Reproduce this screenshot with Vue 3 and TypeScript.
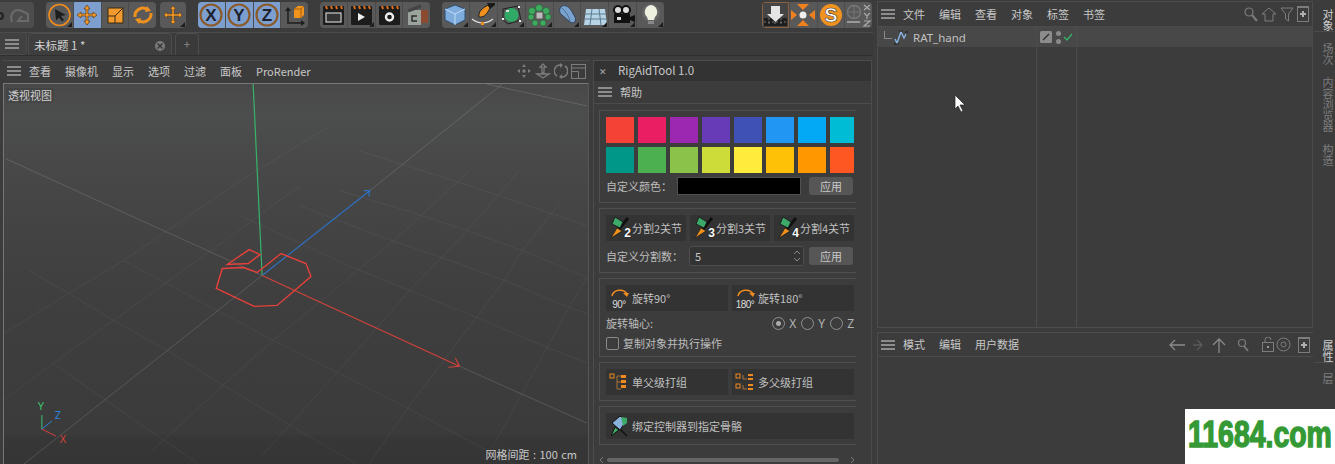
<script setup lang="ts">
const viewMenu = ['查看', '摄像机', '显示', '选项', '过滤', '面板', 'ProRender']
const objMenu = ['文件', '编辑', '查看', '对象', '标签', '书签']
const attrMenu = ['模式', '编辑', '用户数据']
const swatches = [
  '#f44336', '#e91e63', '#9c27b0', '#673ab7', '#3f51b5', '#2196f3', '#03a9f4', '#00bcd4',
  '#009688', '#4caf50', '#8bc34a', '#cddc39', '#ffeb3b', '#ffc107', '#ff9800', '#ff5722'
]
const splits = [2, 3, 4]
const sideTop = ['对象', '场次', '内容浏览器', '构造']
const gridLines = [
  '260,457 290,425 337,372 375,330 410,290 442,257 468,230 520,170',
  '370,463 408,408 477,317 505,280 523,250 560,203',
  '493,447 523,393 548,347 570,307 588,277',
  '150,452 163,440 223,385 273,340 330,293 400,235 470,170',
  '3,333 68,293 123,260 167,230 240,180 330,125',
  '3,400 52,363 113,320 173,277 245,225 300,185',
  '353,267 410,290 477,317 548,347 588,363',
  '240,215 353,267',
  '28,270 68,293 113,320 163,348 223,385 290,425 357,464',
  '52,363 163,440 197,463',
  '123,260 273,340 337,372 408,408 487,450 515,464',
  '300,205 383,237 442,257 505,280 570,307 588,313',
  '340,190 407,210 468,230 523,250 588,277',
  '360,150 470,185 588,225'
]
</script>

<template>
  <div class="app">
    <div class="left">
      <header class="toolbar">
        <div class="group g0">
          <div class="btn">
            <svg width="34" height="26" viewBox="0 0 34 26"><path d="M12 20c-3-9 3-14 10-11l6 3v7H18l4-5" fill="none" stroke="#6b6b6b" stroke-width="2"/><circle cx="0" cy="14" r="3" fill="none" stroke="#222" stroke-width="2"/></svg>
          </div>
        </div>
        <div class="group g1">
          <div class="btn tri">
            <svg width="27" height="26" viewBox="0 0 27 26"><circle cx="13.500" cy="13" r="10.500" fill="none" stroke="#f08c1e" stroke-width="1.600"/><path d="M9 7l11 6-5 1 3 4-2 1.500-3-4-3 3z" fill="#1e1e1e"/></svg>
          </div>
          <div class="btn on">
            <svg width="28" height="26" viewBox="0 0 28 26"><path d="M14 3l3 4h-2v5h5v-2l4 3-4 3v-2h-5v5h2l-3 4-3-4h2v-5H8v2l-4-3 4-3v2h5V7h-2z" fill="#f5992a" stroke="#5a3a10" stroke-width=".7"/></svg>
          </div>
          <div class="btn">
            <svg width="28" height="26" viewBox="0 0 28 26"><rect x="7" y="6" width="15" height="15" fill="#f29a2e" stroke="#3a2a10"/><path d="M7 14h7v7M14 14l8-8" fill="none" stroke="#3a2a10"/></svg>
          </div>
          <div class="btn">
            <svg width="28" height="26" viewBox="0 0 28 26"><path d="M6 15a8 8 0 0 1 13-7M22 11a8 8 0 0 1-13 7" fill="none" stroke="#f0901e" stroke-width="3"/><path d="M18 4l4 5-6 1zM10 22l-4-5 6-1z" fill="#f0901e"/></svg>
          </div>
        </div>
        <div class="group g2">
          <div class="btn tri">
            <svg width="26" height="26" viewBox="0 0 26 26"><path d="M13 4l3 3h-2v5h5v-2l3 3-3 3v-2h-5v5h2l-3 3-3-3h2v-5H7v2l-3-3 3-3v2h5V7h-2z" fill="#f5992a" stroke="#5a3a10" stroke-width=".5"/></svg>
          </div>
        </div>
        <div class="group g3">
          <div v-for="a in ['X','Y','Z']" :key="a" class="btn on">
            <svg width="28" height="26" viewBox="0 0 28 26"><circle cx="14" cy="13" r="10.500" fill="none" stroke="#8c5a28" stroke-width="2.200"/><text x="14" y="19" text-anchor="middle" class="axis">{{ a }}</text></svg>
          </div>
          <div class="btn">
            <svg width="28" height="26" viewBox="0 0 28 26"><path d="M7 7v14h15" fill="none" stroke="#1e1e1e" stroke-width="1.500"/><path d="M4 9l3-4 3 4zM20 18l4 3-4 3z" fill="#1e1e1e"/><path d="M13 7l4-3h6v9l-3 3h-7z" fill="#f0941e"/><path d="M13 7h7v9M20 7l3-3" fill="none" stroke="#a85f10"/></svg>
          </div>
        </div>
        <div class="group g4">
          <div class="btn">
            <svg width="28" height="26" viewBox="0 0 28 26"><rect x="4" y="4" width="21" height="19" rx="1" fill="#1c1c1c"/><path d="M7 4l1 3M12 4l1 3M17 4l1 3M22 4l1 3" stroke="#e0701e" stroke-width="2"/><rect x="7" y="11" width="15" height="9" fill="#333" stroke="#ccc" stroke-width="1.200"/></svg>
          </div>
          <div class="btn tri">
            <svg width="28" height="26" viewBox="0 0 28 26"><rect x="4" y="4" width="21" height="19" rx="1" fill="#1c1c1c"/><path d="M7 4l1 3M12 4l1 3M17 4l1 3M22 4l1 3" stroke="#e0701e" stroke-width="2"/><path d="M11 11l7 4-7 4z" fill="#eee"/></svg>
          </div>
          <div class="btn">
            <svg width="28" height="26" viewBox="0 0 28 26"><rect x="4" y="4" width="21" height="19" rx="1" fill="#1c1c1c"/><path d="M7 4l1 3M12 4l1 3M17 4l1 3M22 4l1 3" stroke="#e0701e" stroke-width="2"/><circle cx="14.500" cy="15" r="3.500" fill="none" stroke="#eee" stroke-width="2.400"/></svg>
          </div>
          <div class="btn">
            <svg width="27" height="26" viewBox="0 0 27 26"><rect x="12" y="8" width="13" height="13" fill="#8c4a30"/><rect x="5" y="8" width="13" height="15" fill="#9aa49c"/><path d="M5 9l13-5" stroke="#444" stroke-width="3"/><path d="M14 14h-5v5h5" fill="none" stroke="#2c2c2c" stroke-width="1.500"/></svg>
          </div>
        </div>
        <div class="group g5">
          <div class="btn tri">
            <svg width="28" height="26" viewBox="0 0 28 26"><path d="M14 3l10 4v11l-10 5-10-5V7z" fill="#7eaddd" stroke="#2f4f70"/><path d="M4 7l10 5 10-5M14 12v11" fill="none" stroke="#c0dcf5"/></svg>
          </div>
          <div class="btn tri">
            <svg width="28" height="26" viewBox="0 0 28 26"><path d="M10 15c-1-6 4-9 9-12l2 3c-2 4-5 10-11 9z" fill="#f0901e" stroke="#222"/><path d="M18 1h8v2l-5 4z" fill="#1a1a1a"/><path d="M3 17c6 5 15 5 21 0" fill="none" stroke="#ddd" stroke-width="1.200"/><rect x="12" y="20" width="3" height="3" fill="#f0901e"/></svg>
          </div>
          <div class="btn tri">
            <svg width="28" height="26" viewBox="0 0 28 26"><path d="M6 7l15-3 3 14-13 4-5-4z" fill="#555" stroke="#222"/><circle cx="14.500" cy="13" r="7" fill="#2fa965"/><rect x="9" y="8" width="3" height="2" fill="#ddd"/><rect x="5" y="16" width="2" height="2" fill="#eee"/><rect x="21" y="4" width="2" height="2" fill="#eee"/><rect x="22" y="18" width="2" height="2" fill="#eee"/></svg>
          </div>
          <div class="btn tri">
            <svg width="28" height="26" viewBox="0 0 28 26"><g fill="#3eab5e" stroke="#1d5a30" stroke-width=".5"><circle cx="14" cy="6" r="3.500"/><circle cx="21" cy="9" r="3.500"/><circle cx="23" cy="15" r="3"/><circle cx="18" cy="21" r="3"/><circle cx="10" cy="21" r="3"/><circle cx="6" cy="15" r="3"/><circle cx="7" cy="9" r="3.500"/></g><rect x="11" y="10" width="7" height="7" fill="#bbb" stroke="#555"/></svg>
          </div>
          <div class="btn tri">
            <svg width="28" height="26" viewBox="0 0 28 26"><path d="M8 5c3-3 7-1 10 3l4 7c2 5-2 7-5 5l-8-7c-3-2-3-6-1-8z" fill="#7aa3cf" stroke="#2f4560"/><path d="M9 6c3 3 7 8 8 13" fill="none" stroke="#4c6f95"/></svg>
          </div>
          <div class="btn tri">
            <svg width="28" height="26" viewBox="0 0 28 26"><path d="M5 7h19l2 16H3z" fill="#b6d4e6"/><path d="M4 12h21M3 17h23M11 7l-2 16M18 7l2 16" stroke="#5a7a90"/></svg>
          </div>
          <div class="btn tri">
            <svg width="28" height="26" viewBox="0 0 28 26"><circle cx="9" cy="8" r="4" fill="#ddd" stroke="#111" stroke-width="2"/><circle cx="17" cy="8" r="4" fill="#ddd" stroke="#111" stroke-width="2"/><rect x="5" y="12" width="16" height="9" fill="#111"/><path d="M21 15l5-2v7l-5-2z" fill="#111"/><rect x="8" y="15" width="4" height="3" fill="#ddd"/></svg>
          </div>
          <div class="btn tri">
            <svg width="28" height="26" viewBox="0 0 28 26"><circle cx="14" cy="11" r="9" fill="#666"/><path d="M14 3a7 7 0 0 1 4 12l-1 3h-6l-1-3a7 7 0 0 1 4-12z" fill="#eef0e0"/><rect x="11" y="19" width="6" height="3" fill="#888"/></svg>
          </div>
        </div>
        <div class="spacer"></div>
        <div class="group g6">
          <div class="btn dropbtn">
            <svg width="27" height="24" viewBox="0 0 27 24"><rect x="2" y="15" width="23" height="8" fill="#1d1d1d"/><path d="M2 19h23M7 15v8M13 15v8M19 15v8" stroke="#777" stroke-dasharray="2 2"/><path d="M9 3h9v8h4l-8.500 8L5 11h4z" fill="#e4e4e4"/></svg>
          </div>
          <div class="btn">
            <svg width="28" height="26" viewBox="0 0 28 26"><circle cx="14" cy="13" r="3.500" fill="#eee"/><path d="M8 2h12l-6 6zM8 24h12l-6-6zM2 8v10l6-5zM26 8v10l-6-5z" fill="#f0801e"/></svg>
          </div>
          <div class="btn">
            <svg width="28" height="26" viewBox="0 0 28 26"><circle cx="14" cy="13" r="11" fill="#f2921e"/><text x="14" y="20" text-anchor="middle" class="ess">S</text></svg>
          </div>
          <div class="btn">
            <svg width="27" height="26" viewBox="0 0 27 26"><circle cx="9" cy="10" r="6.500" fill="none" stroke="#777" stroke-width="1.500"/><path d="M9 3v14M3 10h12" stroke="#777"/><path d="M2 20h13" stroke="#999" stroke-width="2"/><path d="M19 3l6 5M25 3l-6 5M19 11l3 3 3-3M22 14v3M19 19h6l-6 5h6" fill="none" stroke="#aaa" stroke-width="1.200"/></svg>
          </div>
        </div>
      </header>

      <div class="tabbar">
        <div class="tabmenu"><span class="burger"></span></div>
        <div class="tab">
          <span>未标题 1 *</span>
          <svg width="12" height="12" viewBox="0 0 12 12"><circle cx="6" cy="6" r="5" fill="#7a7a7a"/><path d="M3.500 3.500l5 5M8.500 3.500l-5 5" stroke="#333" stroke-width="1.300"/></svg>
        </div>
        <div class="tab plus">+</div>
      </div>

      <div class="panes">
        <section class="viewport">
          <div class="menubar">
            <span class="burger"></span>
            <div class="menu"><span v-for="m in viewMenu" :key="m">{{ m }}</span></div>
            <div class="vicons">
              <svg width="16" height="16" viewBox="0 0 16 16"><path d="M8 1l2 3H6zM8 15l-2-3h4zM1 8l3-2v4zM15 8l-3 2V6z" fill="#7c7c7c"/><rect x="6.500" y="6.500" width="3" height="3" fill="#7c7c7c"/></svg>
              <svg width="16" height="16" viewBox="0 0 16 16"><path d="M8 1l3 3H9v6H7V4H5zM2 11h12l-6 4z" fill="none" stroke="#7c7c7c" stroke-width="1.300"/></svg>
              <svg width="14" height="16" viewBox="0 0 14 16"><path d="M6 2a6 6 0 0 0-3 11M8 14a6 6 0 0 0 3-11" fill="none" stroke="#7c7c7c" stroke-width="1.500"/><path d="M6 0v5L9 2zM8 11v5l-3-2z" fill="#7c7c7c"/></svg>
              <svg width="15" height="15" viewBox="0 0 15 15"><rect x=".5" y=".5" width="14" height="14" fill="none" stroke="#7c7c7c"/><path d="M.5 7.500h7v7M.5 4h14" fill="none" stroke="#7c7c7c"/></svg>
            </div>
          </div>
          <div class="view">
            <svg class="scene" viewBox="3 83 586 381" preserveAspectRatio="none">
              <polyline v-for="(g, i) in gridLines" :key="i" :points="g" fill="none" stroke="#fff" stroke-opacity=".05"/>
              <path d="M262 275L23 464M5 158L262 275M370 190L503 83M487 83L588 105M460 366L588 423" fill="none" stroke="#fff" stroke-opacity=".14"/>
              <path d="M253 83L262 275" stroke="#36b36a" stroke-width="1.200"/>
              <path d="M262 275L370 190M364 190L370 190L369 196" fill="none" stroke="#2f6fbe" stroke-width="1.200"/>
              <path d="M262 275L460 366M449 367L460 366L456 358" fill="none" stroke="#d0433a" stroke-width="1.200"/>
              <path d="M222 268L243 267L257 272L281 253L306 263L311 276L277 305L254 306L216 288Z" fill="none" stroke="#e8403a" stroke-width="1.400"/>
              <path d="M227 264L249 249L260 254L248 263Z" fill="none" stroke="#e8403a" stroke-width="1.400"/>
              <path d="M41 429V415" stroke="#3cc070"/>
              <path d="M41 429L51 421" stroke="#2f80d8"/>
              <path d="M41 429L55 436" stroke="#d8403a"/>
              <text x="37" y="410" class="gz gy">Y</text>
              <text x="54" y="419" class="gz gb">Z</text>
              <text x="59" y="443" class="gz gr">X</text>
            </svg>
            <span class="vname">透视视图</span>
            <span class="vgrid">网格间距 : 100 cm</span>
          </div>
        </section>

        <section class="rig">
          <div class="rigtitle"><span class="rigx">✕</span><span>RigAidTool 1.0</span></div>
          <div class="rigmenu"><span class="burger"></span><span class="rigmenutext">帮助</span></div>
          <div class="rigbody">
            <div class="sec s1">
              <div class="swatches"><i v-for="c in swatches" :key="c" :style="{ background: c }"></i></div>
              <div class="row">
                <span class="lab w71">自定义颜色：</span>
                <span class="black"></span>
                <span class="apply">应用</span>
              </div>
            </div>
            <div class="sec s2">
              <div class="btnrow">
                <div v-for="n in splits" :key="n" class="tool">
                  <span class="splitico">
                    <svg width="22" height="24" viewBox="0 0 22 24"><path d="M19 2L10 13" stroke="#111" stroke-width="3"/><path d="M6 1l8 5-3 6-8-4z" fill="#3ea868" stroke="#111" stroke-width=".8"/><path d="M8 12l5 3-11 7z" fill="#f0901e" stroke="#111" stroke-width=".6"/></svg>
                    <b>{{ n }}</b>
                  </span>
                  <span>分割{{ n }}关节</span>
                </div>
              </div>
              <div class="row r2">
                <span class="lab w83">自定义分割数：</span>
                <div class="spin">
                  <span>5</span>
                  <svg width="8" height="14" viewBox="0 0 8 14"><path d="M1 5l3-3 3 3M1 9l3 3 3-3" fill="none" stroke="#8a8a8a"/></svg>
                </div>
                <span class="apply">应用</span>
              </div>
            </div>
            <div class="sec s3">
              <div class="btnrow">
                <div class="tool">
                  <span class="rotico"><svg width="20" height="10" viewBox="0 0 20 10"><path d="M2 9a8 7 0 0 1 15-2" fill="none" stroke="#ef8a20" stroke-width="1.500"/><path d="M13 6l6 0-2 4z" fill="#ef8a20"/></svg><em>90°</em></span>
                  <span>旋转90°</span>
                </div>
                <div class="tool">
                  <span class="rotico"><svg width="20" height="10" viewBox="0 0 20 10"><path d="M2 9a8 7 0 0 1 15-2" fill="none" stroke="#ef8a20" stroke-width="1.500"/><path d="M13 6l6 0-2 4z" fill="#ef8a20"/></svg><em>180°</em></span>
                  <span>旋转180°</span>
                </div>
              </div>
              <div class="axisrow">
                <span class="lab">旋转轴心:</span>
                <div class="radios">
                  <label><i class="radio sel"></i>X</label>
                  <label><i class="radio"></i>Y</label>
                  <label><i class="radio"></i>Z</label>
                </div>
              </div>
              <div class="checkrow"><i class="check"></i><span class="lab">复制对象并执行操作</span></div>
            </div>
            <div class="sec s4">
              <div class="btnrow">
                <div class="tool">
                  <svg class="gi" width="20" height="20" viewBox="0 0 20 20"><rect x="1" y="2" width="4" height="4" fill="none" stroke="#ef8a20"/><path d="M8 4v13h4M8 10h4M8 4h4" fill="none" stroke="#a8743a"/><path d="M12 3h5v3h-5zM12 8h5v3h-5zM12 13h5v3h-5z" fill="#ef8a20"/></svg>
                  <span>单父级打组</span>
                </div>
                <div class="tool">
                  <svg class="gi" width="20" height="20" viewBox="0 0 20 20"><rect x="1" y="2" width="4" height="4" fill="none" stroke="#ef8a20"/><rect x="1" y="12" width="4" height="4" fill="none" stroke="#ef8a20"/><path d="M8 3v4h4M8 13v4h4" fill="none" stroke="#a8743a"/><path d="M13 2h5v2h-5zM13 6h5v2h-5zM13 12h5v2h-5zM13 16h5v2h-5z" fill="#ef8a20"/></svg>
                  <span>多父级打组</span>
                </div>
              </div>
            </div>
            <div class="sec s5">
              <div class="tool wide">
                <svg class="gi" width="20" height="22" viewBox="0 0 20 22"><path d="M3 8l8-7 6 5-6 9z" fill="#8ab0dc" stroke="#111"/><path d="M12 2l6 1v5l-4 3z" fill="#3ea868"/><path d="M6 12l4 3-8 6z" fill="#3ea868" stroke="#111"/><path d="M12 15l6 6" stroke="#111" stroke-width="1.500"/></svg>
                <span>绑定控制器到指定骨骼</span>
              </div>
            </div>
            <div class="hscroll">
              <svg width="5" height="8" viewBox="0 0 5 8"><path d="M4 1L1 4l3 3" fill="none" stroke="#7a7a7a"/></svg>
              <div class="thumb"></div>
              <svg width="5" height="8" viewBox="0 0 5 8"><path d="M1 1l3 3-3 3" fill="none" stroke="#7a7a7a"/></svg>
            </div>
          </div>
        </section>
      </div>
    </div>

    <div class="right">
      <div class="stack">
        <section class="objects">
          <div class="phead">
            <span class="burger"></span>
            <div class="menu"><span v-for="m in objMenu" :key="m">{{ m }}</span></div>
            <div class="picons">
              <svg width="14" height="15" viewBox="0 0 14 15"><circle cx="5" cy="5" r="4" fill="none" stroke="#7c7c7c" stroke-width="1.200"/><path d="M8 8l5 6" stroke="#7c7c7c" stroke-width="2"/></svg>
              <svg width="16" height="15" viewBox="0 0 16 15"><path d="M8 1l7 6h-3v7H4V7H1z" fill="none" stroke="#7c7c7c"/></svg>
              <svg width="14" height="15" viewBox="0 0 14 15"><path d="M1 1h12L8.500 7v7l-3-2V7z" fill="none" stroke="#7c7c7c"/></svg>
              <svg width="12" height="16" viewBox="0 0 12 16"><rect x=".5" y=".5" width="11" height="15" fill="none" stroke="#7c7c7c"/><path d="M0 1h12" stroke="#7c7c7c" stroke-width="2"/><path d="M6 5v6M3 8h6" stroke="#b0b0b0" stroke-width="2"/></svg>
            </div>
          </div>
          <div class="tree">
            <div class="c1">
              <div class="obj">
                <span class="elbow"></span>
                <svg width="16" height="16" viewBox="0 0 16 16"><path d="M2 10l2 4 4-11 3 6 2-4" fill="none" stroke="#8ab8e8" stroke-width="1.300"/><path d="M1 15h5M6 2h4M12 3h3" stroke="#1c1c1c"/></svg>
                <span class="oname">RAT_hand</span>
              </div>
            </div>
            <div class="c2">
              <div class="obj tags">
                <svg width="12" height="12" viewBox="0 0 12 12"><rect width="12" height="12" rx="1.500" fill="#8c8c8c"/><path d="M3 9l6-6" stroke="#333" stroke-width="1.500"/></svg>
                <span class="dots"><i></i><i></i></span>
                <svg width="10" height="8" viewBox="0 0 10 8"><path d="M1 4l3 3 5-6" fill="none" stroke="#35b868" stroke-width="1.200"/></svg>
              </div>
            </div>
            <div class="c3"><div class="obj"></div></div>
          </div>
          <svg class="cursor" width="12" height="19" viewBox="0 0 12 19"><path d="M1 1v14l3-3 3 6 2-1-3-6h5z" fill="#fff" stroke="#222" stroke-width=".7"/></svg>
        </section>
        <section class="attrs">
          <div class="phead ahead">
            <span class="burger"></span>
            <div class="menu"><span v-for="m in attrMenu" :key="m">{{ m }}</span></div>
            <div class="aicons">
              <svg width="34" height="14" viewBox="0 0 34 14"><path d="M1 7h15M6 2L1 7l5 5" fill="none" stroke="#8a8a8a" stroke-width="1.300"/><path d="M18 7h15M28 2l5 5-5 5" fill="none" stroke="#5a5a5a" stroke-width="1.300"/><path d="M18 7h6" stroke="#222"/></svg>
              <svg class="up" width="14" height="16" viewBox="0 0 14 16"><path d="M7 16V2M1 8l6-6 6 6" fill="none" stroke="#8a8a8a" stroke-width="1.300"/></svg>
              <svg class="sr" width="12" height="14" viewBox="0 0 12 14"><circle cx="5" cy="5" r="3.500" fill="none" stroke="#7c7c7c" stroke-width="1.200"/><path d="M7 8l4 5" stroke="#7c7c7c" stroke-width="1.800"/></svg>
              <svg class="lk" width="12" height="15" viewBox="0 0 12 15"><rect x=".5" y="5.500" width="11" height="9" fill="none" stroke="#7c7c7c"/><path d="M3 5V3a3 3 0 0 1 6 0" fill="none" stroke="#7c7c7c"/><rect x="5" y="9" width="2" height="2" fill="#999"/></svg>
              <svg width="15" height="15" viewBox="0 0 15 15"><circle cx="7.500" cy="7.500" r="6.500" fill="none" stroke="#7c7c7c"/><circle cx="7.500" cy="7.500" r="2.500" fill="none" stroke="#7c7c7c"/></svg>
              <svg class="dc" width="12" height="16" viewBox="0 0 12 16"><rect x=".5" y=".5" width="11" height="15" fill="none" stroke="#7c7c7c"/><path d="M0 1h12" stroke="#7c7c7c" stroke-width="2"/><path d="M6 5v6M3 8h6" stroke="#b0b0b0" stroke-width="2"/></svg>
            </div>
          </div>
        </section>
      </div>
      <aside class="side">
        <div class="vtabs vt1">
          <span v-for="(t, i) in sideTop" :key="t" :class="{ act: i === 0 }">{{ t }}</span>
        </div>
        <div class="vtabs vt2">
          <span class="act">属性</span>
          <span>层</span>
        </div>
      </aside>
    </div>
    <div class="mark"><span>11684.com</span></div>
  </div>
</template>

<style>
html, body { margin: 0; background: #3c3c3c; overflow: hidden; }
</style>

<style scoped>
.app {
  position: relative;
  display: flex;
  width: 1335px;
  height: 464px;
  overflow: hidden;
  background: #3c3c3c;
  color: #c6c6c6;
  font: 11px/1 "Noto Sans CJK SC", "Noto Sans", sans-serif;
}
.left { width: 873px; flex: none; display: flex; flex-direction: column; }
.toolbar {
  display: flex;
  height: 32px;
  border-bottom: 1px solid #4c4c4c;
  flex: none;
}
.group {
  display: flex;
  height: 26px;
  margin-top: 2px;
  background: #595959;
  border-radius: 4px;
  overflow: hidden;
  flex: none;
}
.g0 { width: 34px; margin-right: 12px; border-radius: 0 4px 4px 0; background: #4d4d4d; }
.g1 { width: 110px; margin-right: 4px; }
.g2 { width: 26px; margin-right: 12px; }
.g3 { width: 110px; margin-right: 12px; }
.g4 { width: 110px; margin-right: 12px; }
.g5 { width: 222px; }
.g6 { width: 110px; margin-right: 1px; }
.spacer { flex: 1; }
.btn { position: relative; flex: 1 1 0; min-width: 0; height: 26px; display: flex; justify-content: center; box-sizing: border-box; border-right: 1px solid #4c4c4c; }
.btn svg { flex: none; }
.btn:last-child { border-right: 0; }
.btn.on { background: #7d9fd0; }
.btn.tri::after {
  content: "";
  position: absolute;
  right: 1px;
  bottom: 1px;
  border-left: 5px solid transparent;
  border-bottom: 5px solid #1e1e1e;
}
.axis { font: 700 17px "Liberation Sans", sans-serif; fill: #1c2230; }
.ess { font: 700 20px "Liberation Sans", sans-serif; fill: #fff; stroke: #333; stroke-width: .6px; }
.dropbtn { background: #444; box-shadow: inset 0 0 0 1px #8a6040; padding-top: 1px; }

.burger {
  display: block;
  width: 14px;
  height: 2px;
  margin: 4px 0;
  background: #8c8c8c;
  box-shadow: 0 -4px 0 #8c8c8c, 0 4px 0 #8c8c8c;
  flex: none;
}
.tabbar {
  display: flex;
  align-items: flex-end;
  height: 22px;
  border-bottom: 1px solid #2f2f2f;
  background: #3a3a3a;
  flex: none;
}
.tabmenu { width: 27px; height: 22px; display: flex; align-items: center; padding-left: 5px; box-sizing: border-box; border: 1px solid #4b4b4b; border-width: 0 1px 1px 0; border-radius: 0 0 4px 0; background: #414141; }
.tab {
  display: flex;
  align-items: center;
  justify-content: space-between;
  width: 144px;
  height: 22px;
  box-sizing: border-box;
  padding: 2px 5px 0 5px;
  margin-left: 1px;
  background: #3e3e3e;
  border: 1px solid #4d4d4d;
  border-bottom: 0;
  border-radius: 4px 4px 0 0;
  color: #d4d4d4;
  font-size: 11.500px;
}
.tab.plus { width: 24px; margin-left: 3px; justify-content: center; color: #8a8a8a; padding: 0; background: #3a3a3a; }

.panes { flex: 1; display: flex; min-height: 0; margin-top: 4px; padding-left: 2px; }
.viewport { width: 588px; flex: none; display: flex; flex-direction: column; border-top: 1px solid #4c4c4c; }
.menubar { height: 22px; flex: none; display: flex; align-items: center; padding: 0 0 2px 5px; box-sizing: border-box; position: relative; }
.menu { display: flex; gap: 14px; margin-left: 8px; color: #c8c8c8; font-size: 11px; }
.vicons { margin-left: auto; display: flex; align-items: center; gap: 3px; padding-right: 4px; }
.view {
  position: relative;
  flex: 1;
  margin-left: 1px;
  margin-right: 1px;
  border: 1px solid #777;
  border-width: 1px 0 0 1px;
  border-right: 1px solid #555;
  background: linear-gradient(#484848 0, #4c4e4d 8%, #464746 25%, #3f3f3f 55%, #3b3b3b 92%, #373737 93%, #353535 100%);
  overflow: hidden;
}
.scene { position: absolute; inset: 0; width: 100%; height: 100%; display: block; }
.gz { font: 11px "Noto Sans", sans-serif; }
.gy { fill: #3cc070; }
.gb { fill: #2f80d8; }
.gr { fill: #d8403a; }
.vname { position: absolute; left: 2px; top: 4px; padding: 2px 2px; background: rgba(0,0,0,.08); border-radius: 3px; color: #d0d0d0; font-size: 11px; }
.vgrid { position: absolute; right: 11px; bottom: 4px; color: #c8c8c8; font-size: 11px; word-spacing: 1px; }

.rig { margin-left: 3px; width: 279px; flex: none; display: flex; flex-direction: column; border: 1px solid #4c4c4c; border-bottom: 0; box-sizing: border-box; min-height: 0; }
.rigtitle { height: 20px; flex: none; display: flex; align-items: center; background: #333; padding-left: 5px; color: #c8c8c8; font-size: 11.500px; }
.rigx { width: 19px; font-size: 9px; color: #aaa; }
.rigmenu { height: 22px; flex: none; display: flex; align-items: center; padding-left: 4px; border-bottom: 1px solid #4c4c4c; }
.rigmenutext { margin-left: 8px; }
.rigbody { width: 262px; flex: 1; overflow: hidden; padding: 6px 0 0 5px; box-sizing: border-box; display: flex; flex-direction: column; gap: 5px; }
.sec { width: 270px; box-sizing: border-box; border: 1px solid #4f4f4f; padding: 6px; flex: none; }
.s1 { height: 93px; }
.s2 { height: 65px; }
.s3 { height: 79px; }
.s4 { height: 39px; }
.s5 { height: 39px; }
.swatches { display: grid; grid-template-columns: repeat(8, 28px); gap: 4px; height: 56px; width: 248px; overflow: hidden; }
.swatches i { display: block; height: 26px; }
.row { display: flex; align-items: center; height: 18px; margin-top: 4px; }
.lab { color: #bcbcbc; font-size: 11px; white-space: nowrap; }
.w71 { width: 71px; }
.w83 { width: 83px; }
.black { width: 124px; height: 18px; box-sizing: border-box; background: #000; border: 1px solid #505050; }
.apply { margin-left: 8px; width: 44px; height: 18px; background: #565656; border-radius: 3px; text-align: center; line-height: 18px; color: #c8c8c8; font-size: 11px; }
.btnrow { display: flex; gap: 4px; width: 248px; }
.tool { flex: 1 1 0; height: 26px; min-width: 0; display: flex; align-items: center; background: #333; color: #c0c0c0; font-size: 11px; white-space: nowrap; padding-left: 3px; gap: 3px; }
.tool.wide { width: 248px; box-sizing: border-box; flex: none; }
.splitico { position: relative; width: 20px; height: 24px; display: block; flex: none; }
.splitico svg { display: block; }
.splitico b { position: absolute; right: -2px; bottom: 0; font: 700 12px "Liberation Sans", sans-serif; color: #fff; text-shadow: 0 0 1px #000; }
.r2 { margin-top: 5px; height: 20px; }
.spin { width: 115px; height: 20px; box-sizing: border-box; background: #333; border: 1px solid #4e4e4e; border-radius: 3px; display: flex; align-items: center; justify-content: space-between; padding: 0 2px 0 5px; margin-right: -3px; }
.rotico { position: relative; width: 20px; height: 22px; flex: none; display: block; }
.rotico svg { position: absolute; left: 1px; top: 0; }
.rotico em { position: absolute; left: -1px; right: -1px; bottom: -1px; text-align: center; font: normal 10px "Liberation Sans", sans-serif; color: #ddd; letter-spacing: -.5px; }
.axisrow { display: flex; justify-content: space-between; align-items: center; height: 15px; margin-top: 5px; width: 248px; }
.radios { display: flex; gap: 5px; font-size: 12px; color: #b4b4b4; font-family: "Noto Sans", sans-serif; }
.radios label { display: flex; align-items: center; gap: 4px; }
.radio { width: 11px; height: 11px; border: 1px solid #909090; border-radius: 50%; display: block; position: relative; }
.radio.sel::after { content: ""; position: absolute; left: 3px; top: 3px; width: 5px; height: 5px; border-radius: 50%; background: #aaa; }
.checkrow { display: flex; align-items: center; gap: 4px; margin-top: 5px; height: 14px; }
.check { width: 11px; height: 11px; border: 1px solid #8a8a8a; border-radius: 2px; display: block; flex: none; }
.gi { flex: none; }
.hscroll { display: flex; align-items: center; margin-top: 6px; width: 256px; gap: 3px; }
.thumb { flex: 1; height: 4px; background: #666; border-radius: 2px; margin-right: 8px; }

.right { flex: 1; margin-left: 4px; display: flex; min-width: 0; }
.stack { width: 436px; flex: none; display: flex; flex-direction: column; padding-top: 1px; box-sizing: border-box; }
.objects { position: relative; height: 327px; flex: none; border: 1px solid #4c4c4c; box-sizing: border-box; display: flex; flex-direction: column; }
.phead { height: 25px; flex: none; display: flex; align-items: center; padding-left: 3px; box-sizing: border-box; border-bottom: 1px solid #4c4c4c; }
.picons { margin-left: auto; display: flex; align-items: center; gap: 3px; padding-right: 3px; }
.tree { flex: 1; display: flex; min-height: 0; }
.c1 { width: 158px; border-right: 1px solid #4c4c4c; }
.c2 { width: 39px; border-right: 1px solid #4c4c4c; }
.c3 { flex: 1; }
.obj { height: 20px; background: #484848; display: flex; align-items: center; }
.elbow { width: 7px; height: 7px; border: 1px solid #8a8a8a; border-width: 0 0 1px 1px; margin: 0 1px 5px 6px; }
.oname { margin-left: 4px; padding-top: 1px; color: #c0c0c0; font-size: 11.500px; font-family: "Noto Sans", sans-serif; }
.tags { padding-left: 3px; }
.dots { width: 6px; margin-left: 4px; display: flex; flex-direction: column; gap: 3px; }
.dots i { width: 5px; height: 5px; border-radius: 50%; background: #8a8a8a; display: block; }
.tags svg:last-child { margin-left: 1px; }
.cursor { position: absolute; left: 76px; top: 92px; }
.attrs { margin-top: 4px; flex: 1; border-top: 1px solid #4c4c4c; border-left: 1px solid #4c4c4c; }
.ahead { height: 24px; border-bottom: 1px solid #4a4a4a; }
.aicons { margin-left: auto; display: flex; align-items: center; padding-right: 3px; }
.aicons .up { margin-left: 9px; }
.aicons .sr { margin-left: 11px; }
.aicons .lk { margin-left: 13px; margin-right: 2px; }
.aicons .dc { margin-left: 7px; }
.side { width: 22px; flex: none; display: flex; flex-direction: column; }
.vtabs { writing-mode: vertical-rl; display: flex; width: 22px; color: #7c7c7c; font-size: 11px; line-height: 11px; }
.vtabs span { display: block; padding-right: 2px; }
.vt1 { height: 331px; padding-top: 9px; box-sizing: border-box; gap: 12px; flex: none; }
.vt2 { padding-top: 9px; box-sizing: border-box; gap: 11px; }
.vtabs .act { color: #d0d0d0; box-shadow: 0 2px 0 -1px #4c4c4c; }
.mark {
  position: absolute;
  right: 0;
  bottom: 0;
  width: 150px;
  height: 55px;
  background: #fff;
  overflow: hidden;
}
.mark span {
  display: block;
  margin: 6px 0 0 3px;
  transform: scaleX(.79);
  transform-origin: left top;
  white-space: nowrap;
  font: 700 36px/40px "Liberation Sans", sans-serif;
  color: #359a35;
  -webkit-text-stroke: 1.500px #359a35;
}
</style>
